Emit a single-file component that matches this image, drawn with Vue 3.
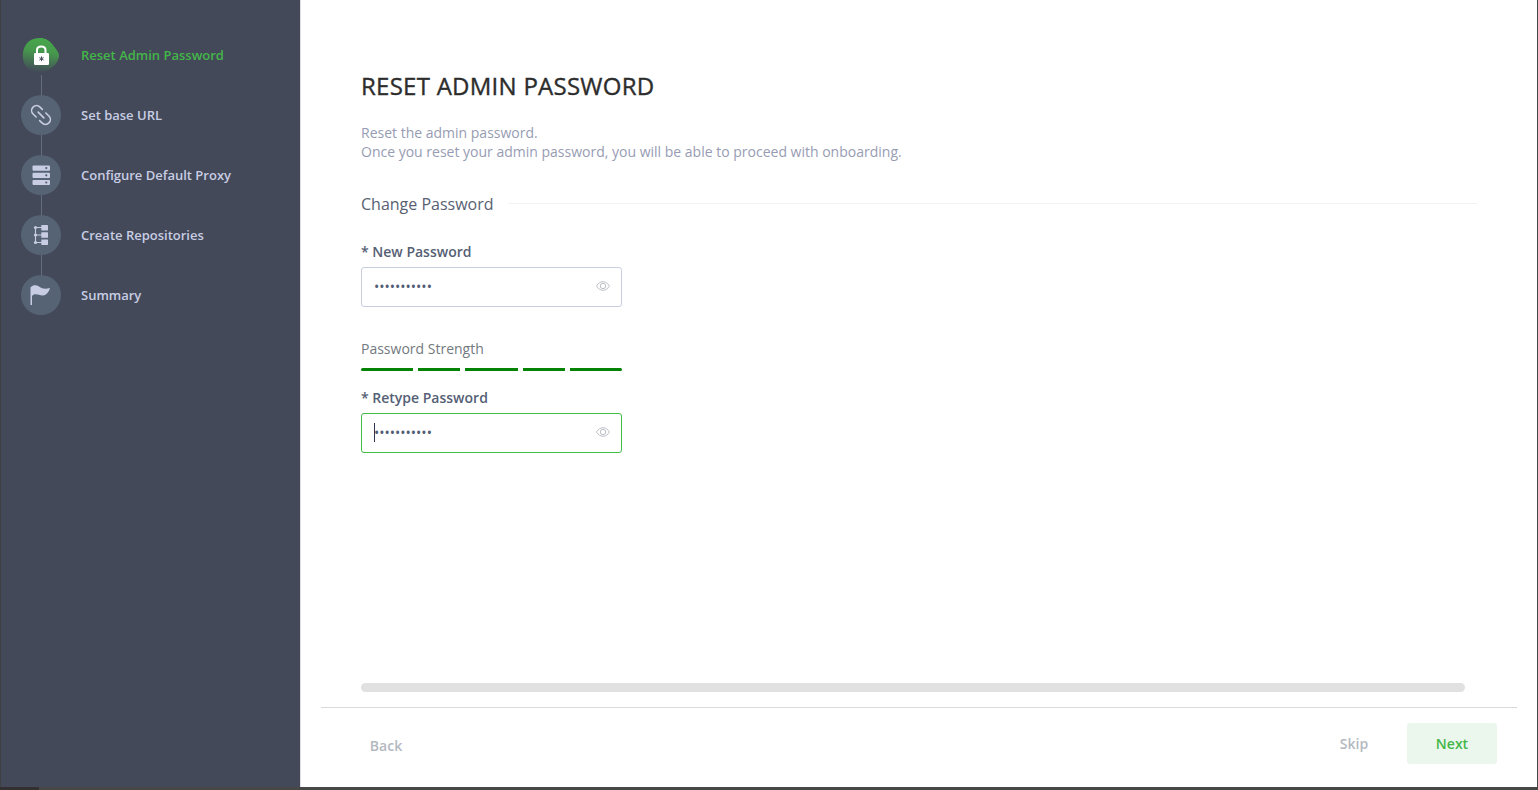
<script setup>
import { ref } from 'vue'

const steps = [
  { id: 'lock', label: 'Reset Admin Password', active: true },
  { id: 'link', label: 'Set base URL' },
  { id: 'server', label: 'Configure Default Proxy' },
  { id: 'tree', label: 'Create Repositories' },
  { id: 'flag', label: 'Summary' },
]
const newPassword = ref('•••••••••••')
const retyped = ref('•••••••••••')
</script>

<template>
  <div class="window">
    <aside class="sidebar">
      <ol class="steps">
        <li v-for="s in steps" :key="s.id" class="step" :class="{ active: s.active }">
          <span class="badge">
            <svg v-if="s.id === 'lock'" width="40" height="40" viewBox="1 0 40 40">
              <defs>
                <linearGradient id="blob" x1="0.55" y1="0" x2="0.4" y2="1">
                  <stop offset="0" stop-color="#47a84b" />
                  <stop offset="0.4" stop-color="#46984d" />
                  <stop offset="1" stop-color="#434a59" />
                </linearGradient>
              </defs>
              <path d="M18.5 3C25 2.5 29 5 32.500 9.500C35.500 13.500 39.500 17.500 39 21.500C38 27.500 34 31.500 29 34.500C22 38.500 13 38 7.500 33C3.500 29 2.500 24 3 18C4 9 10 3.500 18.500 3Z" fill="url(#blob)" />
              <path d="M17 18V15C17 10.200 25.500 10.200 25.500 15V18" fill="none" stroke="#fff" stroke-width="2" />
              <rect x="14" y="18" width="15" height="12" rx="1.200" fill="#fff" />
              <path d="M21.500 21.400V26.200M19.400 22.600L23.600 25M23.600 22.600L19.400 25" stroke="#47505a" stroke-width="1" />
            </svg>
            <svg v-else-if="s.id === 'link'" width="40" height="40" viewBox="0.5 0 40 40" fill="none" stroke="#c8cde4" stroke-width="1.600" stroke-linecap="round">
              <g transform="rotate(45 20.500 20)">
                <path d="M17.500 15.100H14.200A4.900 4.900 0 0 0 14.200 24.900H18.500" />
                <path d="M23.500 24.900H26.800A4.900 4.900 0 0 0 26.800 15.100H22.500" />
                <path d="M16.500 20H24.500" />
              </g>
            </svg>
            <svg v-else-if="s.id === 'server'" width="40" height="40" viewBox="0.700 0 40 40">
              <g fill="#c8cde4">
                <rect x="12.200" y="10.500" width="17.500" height="5.200" rx="1" />
                <rect x="12.200" y="17.700" width="17.500" height="5.200" rx="1" />
                <rect x="12.200" y="24.900" width="17.500" height="5.200" rx="1" />
              </g>
              <g fill="#525f72">
                <circle cx="26" cy="13.100" r="1.100" />
                <circle cx="26" cy="20.300" r="1.100" />
                <circle cx="26" cy="27.500" r="1.100" />
              </g>
            </svg>
            <svg v-else-if="s.id === 'tree'" width="40" height="40" viewBox="1 0 40 40">
              <g fill="none" stroke="#c8cde4" stroke-width="1.100">
                <path d="M15.500 12.500V27.500M15.500 12.500H22M15.500 20H22M15.500 27.500H22" />
              </g>
              <g fill="#c8cde4">
                <rect x="21.300" y="10" width="6.700" height="5.500" rx=".4" />
                <rect x="21.300" y="17.200" width="6.700" height="5.600" rx=".4" />
                <rect x="21.300" y="24.500" width="6.700" height="5.500" rx=".4" />
                <circle cx="15.500" cy="12.500" r="1.600" />
                <circle cx="15.500" cy="20" r="1.600" />
                <circle cx="15.500" cy="27.500" r="1.600" />
              </g>
            </svg>
            <svg v-else width="40" height="40" viewBox="0.500 0 40 40">
              <path d="M10 12.300C12.500 9.700 16 9.700 18.500 11.600C22 14.300 25.500 14.200 29.500 13C28.500 17 26 20 22.500 20.400C19.500 20.700 17.500 19 14.500 19.300C12.700 19.500 11.700 20.400 11.500 21.500V30H10Z" fill="#c8cde4" />
            </svg>
          </span>
          <span class="step-label">{{ s.label }}</span>
        </li>
      </ol>
    </aside>

    <main class="main">
      <section class="content">
        <h1>RESET ADMIN PASSWORD</h1>
        <p class="intro">Reset the admin password.<br />Once you reset your admin password, you will be able to proceed with onboarding.</p>
        <h2><span>Change Password</span><i></i></h2>
        <div class="form">
          <label>* New Password</label>
          <div class="field">
            <span>{{ newPassword }}</span>
            <svg class="eye" width="14" height="10" viewBox="0 0 14 10" fill="none" stroke="#bcc1c8">
              <path d="M.6 5C3.500-.7 10.500-.7 13.400 5C10.500 10.700 3.500 10.700 .6 5Z" />
              <circle cx="7" cy="5" r="2.700" />
            </svg>
          </div>
          <div class="strength-label">Password Strength</div>
          <div class="strength"><i></i><i></i><i></i><i></i><i></i></div>
          <label>* Retype Password</label>
          <div class="field focused">
            <b class="caret"></b>
            <span>{{ retyped }}</span>
            <svg class="eye" width="14" height="10" viewBox="0 0 14 10" fill="none" stroke="#bcc1c8">
              <path d="M.6 5C3.500-.7 10.500-.7 13.400 5C10.500 10.700 3.500 10.700 .6 5Z" />
              <circle cx="7" cy="5" r="2.700" />
            </svg>
          </div>
        </div>
        <div class="scrollbar"></div>
      </section>
      <footer class="footer">
        <button class="back">Back</button>
        <button class="skip">Skip</button>
        <button class="next">Next</button>
      </footer>
    </main>
    <div class="taskbar"></div>
  </div>
</template>

<style>
body { margin: 0; overflow: hidden; }
</style>

<style scoped>
* { box-sizing: border-box; }
.window {
  position: relative;
  display: flex;
  width: 1538px;
  height: 790px;
  border: solid #474747;
  border-width: 0 1px 3px;
  border-left-color: #3e4044;
  background: #fff;
  font-family: "Open Sans", sans-serif;
}
.taskbar { position: absolute; left: -1px; bottom: -3px; width: 39px; height: 3px; background: #323031; }
.sidebar { width: 299px; background: #434958; flex: none; }
.steps { list-style: none; margin: 0; padding: 35px 0 0 20px; }
.step { position: relative; display: flex; align-items: center; height: 40px; margin-bottom: 20px; color: #c8cde4; }
.step:not(:last-child)::after { content: ""; position: absolute; left: 20px; top: 40px; width: 1px; height: 20px; background: #626d7e; }
.badge { width: 40px; height: 40px; border-radius: 50%; background: #556374; }
.badge svg { display: block; }
.active .badge { background: none; }
.step-label { margin-left: 20px; font-size: 13px; font-weight: 600; line-height: 20px; }
.active .step-label { color: #43b649; }
.main { flex: 1; display: flex; flex-direction: column; border-left: 1px solid #dddfe2; padding: 0 20px; }
.content { height: 707px; padding: 69px 40px 0; display: flex; flex-direction: column; flex: none; }
h1 { margin: 0; font-size: 24px; font-weight: 500; line-height: 33px; color: #2d2d2d; letter-spacing: .26px; -webkit-text-stroke: .35px #2d2d2d; }
.intro { margin: 21px 0 0; font-size: 14px; line-height: 19px; color: #979cb3; }
h2 { display: flex; align-items: flex-start; margin: 32px 0 0; font-size: 16px; font-weight: 400; line-height: 22px; color: #595f73; }
h2 i { flex: 1; height: 1px; margin: 10px 0 0 14px; background: #f1f2f4; }
.form { width: 261px; margin-top: 26px; }
label { display: block; height: 26px; font-size: 14px; font-weight: 600; line-height: 22px; color: #556074; }
.field { position: relative; display: flex; align-items: center; justify-content: space-between; height: 40px; padding: 0 11px 2px 12px; border: 1px solid #c8cde0; border-radius: 3px; font-size: 14px; color: #525c75; }
.focused { border-color: #40be46; }
.caret { position: absolute; left: 12px; top: 9px; width: 1px; height: 19px; background: #30374a; }
.strength-label { margin-top: 32px; font-size: 14px; line-height: 20px; color: #737a80; }
.strength { display: grid; grid-template-columns: 52px 42px 53px 42px 52px; gap: 5px; margin: 9px 0 16px; }
.strength i { height: 3px; background: #048204; }
.strength i:first-child { border-radius: 2px 0 0 2px; }
.strength i:last-child { border-radius: 0 2px 2px 0; }
.scrollbar { width: 1104px; height: 9px; margin: auto 0 15px; border-radius: 5px; background: #e1e1e1; }
.footer { flex: 1; display: flex; align-items: flex-start; border-top: 1px solid #d9d9dc; padding: 15px 20px 0 40px; }
button { height: 41px; padding: 0; border: 0; border-radius: 3px; background: none; font: 600 14px/20px "Open Sans", sans-serif; color: #b4b8c0; }
.back { width: 50px; margin-top: 2px; }
.skip { margin-left: auto; width: 90px; margin-right: 8px; }
.next { width: 90px; color: #43b649; background: #ebf7ec; }
</style>
